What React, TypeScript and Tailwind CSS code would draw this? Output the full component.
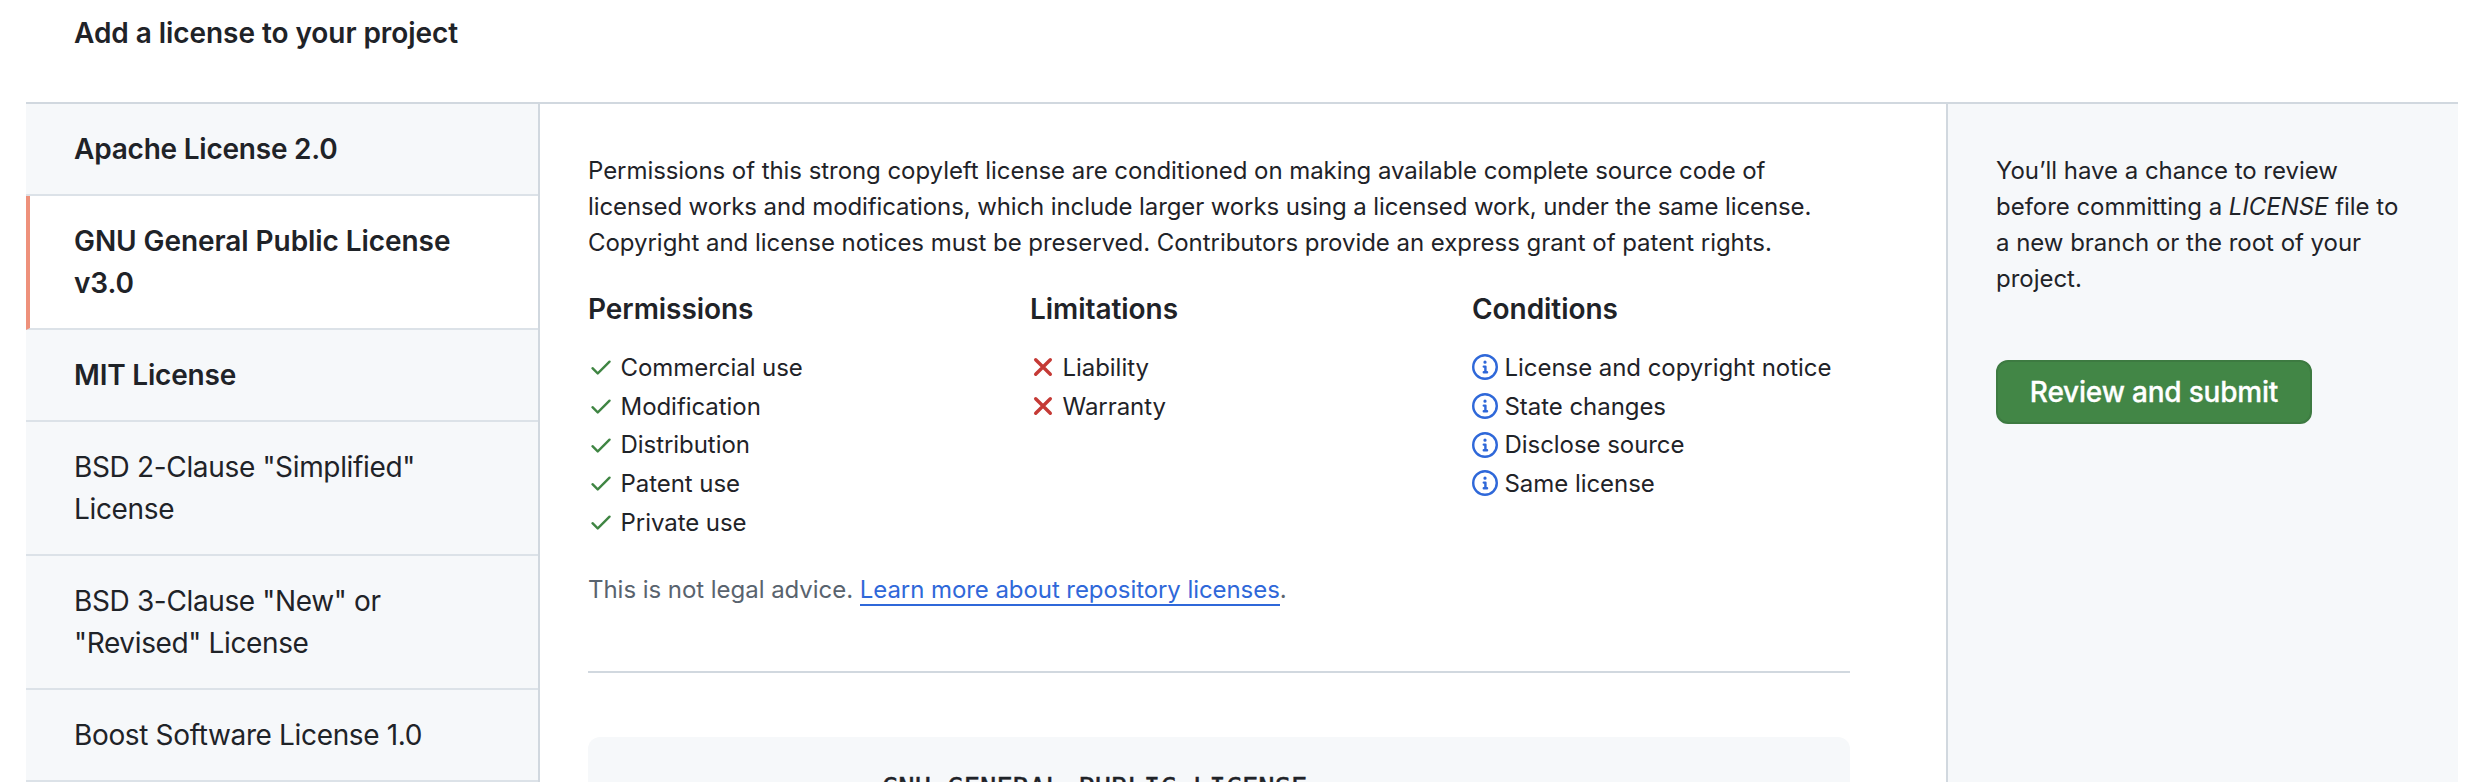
import type { ReactNode } from "react";

const CHECK =
  "M13.78 4.22a.75.75 0 010 1.06l-7.25 7.25a.75.75 0 01-1.06 0L2.22 9.28a.75.75 0 011.06-1.06L6 10.94l6.72-6.72a.75.75 0 011.06 0z";
const INFO =
  "M8 1.5a6.5 6.5 0 100 13 6.5 6.5 0 000-13zM0 8a8 8 0 1116 0A8 8 0 010 8zm6.5-.25A.75.75 0 017.25 7h1a.75.75 0 01.75.75v2.75h.25a.75.75 0 010 1.5h-2a.75.75 0 010-1.5h.25v-2h-.25a.75.75 0 01-.75-.75zM8 6a1 1 0 100-2 1 1 0 000 2z";

const CheckIcon = () => (
  <svg viewBox="0 0 16 16" className="size-[26px] shrink-0 fill-[#3f8543]">
    <path d={CHECK} />
  </svg>
);

const CrossIcon = () => (
  <svg viewBox="0 0 16 16" className="size-[26px] shrink-0 stroke-[#c53a36]">
    <path d="M3.5 3.5l9 9M12.5 3.5l-9 9" strokeWidth="2.1" strokeLinecap="round" />
  </svg>
);

const InfoIcon = () => (
  <svg viewBox="0 0 16 16" className="size-[26px] shrink-0 fill-[#2f68d9]">
    <path fillRule="evenodd" d={INFO} />
  </svg>
);

type License = { lines: string[]; selected?: boolean; style: string };

const licenses: License[] = [
  { lines: ["Apache License 2.0"], style: "font-semibold tracking-[-0.22px]" },
  { lines: ["GNU General Public License", "v3.0"], selected: true, style: "font-semibold tracking-[-0.07px]" },
  { lines: ["MIT License"], style: "font-semibold tracking-[-0.2px]" },
  { lines: ['BSD 2-Clause "Simplified"', "License"], style: "tracking-[-0.34px]" },
  { lines: ['BSD 3-Clause "New" or', '"Revised" License'], style: "tracking-[-0.36px]" },
  { lines: ["Boost Software License 1.0"], style: "tracking-[-0.35px]" },
];

function LicenseItem({ lines, selected, style }: License) {
  return (
    <li
      className={`border-b-2 border-b-[#dce2e8] py-6 leading-[42px] ${
        selected ? "border-l-4 border-l-[#ee917b] bg-white pl-11" : "pl-12"
      } ${style}`}
    >
      {lines.map((line) => (
        <div key={line} className="whitespace-nowrap">
          {line}
        </div>
      ))}
    </li>
  );
}

function Rules({ title, icon, items }: { title: string; icon: ReactNode; items: string[] }) {
  return (
    <section className="w-[442px] shrink-0">
      <h3 className="text-[28px] leading-[42px] font-semibold tracking-[-0.05px]">{title}</h3>
      <ul className="mt-[18px]">
        {items.map((item) => (
          <li key={item} className="flex h-[38.7px] items-center gap-[6.5px] whitespace-nowrap">
            {icon}
            <span className="pt-px tracking-[-0.05px]">{item}</span>
          </li>
        ))}
      </ul>
    </section>
  );
}

export default function App() {
  return (
    <div className="flex h-[782px] flex-col overflow-hidden bg-white px-[26px] font-['Inter',sans-serif] text-[28px] text-[#1f2328]">
      <header className="h-[102px] shrink-0 px-12 pt-3">
        <h1 className="leading-[42px] font-semibold tracking-[-0.06px]">Add a license to your project</h1>
      </header>

      <div className="flex h-[680px] w-[2432px] shrink-0 border-t-2 border-[#d1d8df]">
        <nav className="w-[514px] shrink-0 border-r-2 border-[#d1d8df] bg-[#f6f8fa]">
          <ul>
            {licenses.map((license) => (
              <LicenseItem key={license.lines[0]} {...license} />
            ))}
          </ul>
        </nav>

        <main className="w-[1406px] shrink-0 overflow-hidden pt-[49px] pl-12 text-[24px] leading-9">
          <p className="whitespace-nowrap">
            <span className="block tracking-[-0.06px]">
              Permissions of this strong copyleft license are conditioned on making available complete source code of
            </span>
            <span className="block tracking-[-0.11px]">
              licensed works and modifications, which include larger works using a licensed work, under the same license.
            </span>
            <span className="block tracking-[-0.035px]">
              Copyright and license notices must be preserved. Contributors provide an express grant of patent rights.
            </span>
          </p>

          <div className="mt-[27px] flex h-[253px]">
            <Rules
              title="Permissions"
              icon={<CheckIcon />}
              items={["Commercial use", "Modification", "Distribution", "Patent use", "Private use"]}
            />
            <Rules title="Limitations" icon={<CrossIcon />} items={["Liability", "Warranty"]} />
            <Rules
              title="Conditions"
              icon={<InfoIcon />}
              items={["License and copyright notice", "State changes", "Disclose source", "Same license"]}
            />
          </div>

          <p className="mt-[31px] text-[#59636e]">
            <span className="tracking-[-0.04px]">This is not legal advice. </span>
            <a className="border-b-2 border-[#2f68d9] tracking-[-0.07px] text-[#2f68d9]">
              Learn more about repository licenses
            </a>
            .
          </p>

          <hr className="mt-[63px] w-[1262px] border-t-2 border-[#d1d8df]" />

          <pre className="mt-16 h-40 w-[1262px] rounded-xl bg-[#f6f8fa] px-8 pt-[31px] font-['DejaVu_Sans_Mono',monospace] text-[27.2px] leading-[40px] [-webkit-text-stroke:0.4px_#1f2328]">
            {"                GNU GENERAL PUBLIC LICENSE"}
          </pre>
        </main>

        <aside className="grow border-l-2 border-[#d1d8df] bg-[#f6f8fa] pt-[49px] pl-12 text-[24px] leading-9">
          <p className="tracking-[-0.03px] whitespace-nowrap">
            You’ll have a chance to review
            <br />
            before committing a <em>LICENSE</em> file to
            <br />a new branch or the root of your
            <br />
            project.
          </p>
          <button className="mt-[63px] flex h-16 w-[316px] items-center justify-center rounded-xl border-2 border-[#3d7a41] bg-[#428646] text-[28px] font-medium tracking-[-0.2px] text-white [-webkit-text-stroke:0.3px_white]">
            Review and submit
          </button>
        </aside>
      </div>
    </div>
  );
}
